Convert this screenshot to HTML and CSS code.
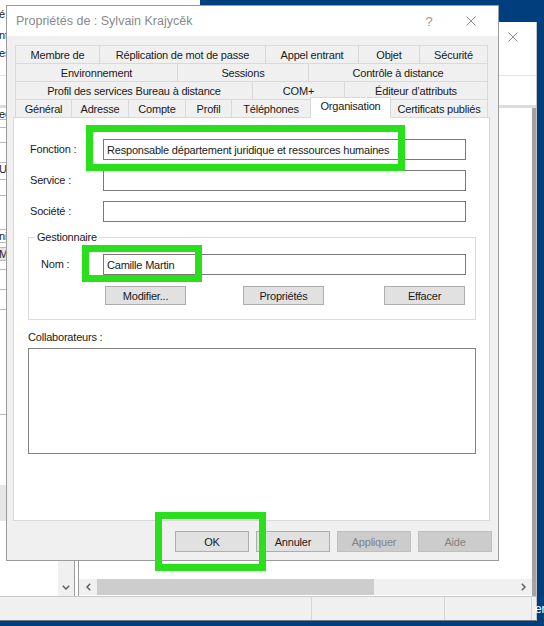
FILE: index.html
```html
<!DOCTYPE html>
<html lang="fr">
<head>
<meta charset="utf-8">
<title>Propriétés de : Sylvain Krajycěk</title>
<link rel="stylesheet" href="styles.css">
</head>
<body>
<div class="desktop">
  <div class="win-a"><span class="frag">é</span></div>

  <div class="win-b">
    <div class="wb-title">
      <div class="wb-frags"><span class="frag">nt</span><span class="frag">es</span></div>
      <svg class="x-icon" width="10" height="10" viewBox="0 0 10 10"><path d="M0.5 0.5 L9.5 9.5 M9.5 0.5 L0.5 9.5" stroke="#8d8d8d" stroke-width="1" fill="none"/></svg>
    </div>
    <div class="wb-menu"></div>
    <div class="wb-tool"></div>
    <div class="wb-panes">
      <div class="lpane">
        <div class="llist">
          <div class="lrow h12"><span class="frag">ec</span></div>
          <div class="lrow h8"></div>
          <div class="lrow h15"></div>
          <div class="lrow h20"></div>
          <div class="lrow h17"><span class="frag">U</span></div>
          <div class="lrow h16"></div>
          <div class="lrow h34"></div>
          <div class="lrow h13"><span class="frag">ni</span></div>
          <div class="lrow h5"></div>
          <div class="lrow h13 grey"><span class="frag">M</span></div>
          <div class="lrow h9"></div>
          <div class="lrow h20"></div>
          <div class="lrow h20"></div>
          <div class="lrow h105"></div>
          <div class="lrow h70 plain"></div>
          <div class="lrow h36 grey plain"></div>
        </div>
        <div class="lscroll">
          <div class="arr-down"><svg width="8" height="5" viewBox="0 0 8 5"><polyline points="0.8,0.8 4,4 7.2,0.8" fill="none" stroke="#606060" stroke-width="1.5"/></svg></div>
        </div>
      </div>
      <div class="splitter"></div>
      <div class="rpane">
        <div class="rlist"></div>
        <div class="hscroll">
          <div class="arr"><svg width="5" height="8" viewBox="0 0 5 8"><polyline points="4.2,0.8 1,4 4.2,7.2" fill="none" stroke="#606060" stroke-width="1.5"/></svg></div>
          <div class="thumb"></div>
          <div class="track"></div>
          <div class="arr"><svg width="5" height="8" viewBox="0 0 5 8"><polyline points="0.8,0.8 4,4 0.8,7.2" fill="none" stroke="#606060" stroke-width="1.5"/></svg></div>
        </div>
      </div>
    </div>
    <div class="wb-status">
      <div class="st st1"></div>
      <div class="st st2"></div>
      <div class="st st3"></div>
    </div>
  </div>

  <div class="desk-label">er</div>

  <div class="dialog">
    <div class="dlg-title">
      <span class="dlg-title-text">Propriétés de : Sylvain Krajycěk</span>
      <span class="cap cap-help">?</span>
      <span class="cap"><svg width="10" height="10" viewBox="0 0 10 10"><path d="M0.5 0.5 L9.5 9.5 M9.5 0.5 L0.5 9.5" stroke="#8d8d8d" stroke-width="1" fill="none"/></svg></span>
    </div>
    <div class="dlg-body">
      <div class="tabs">
        <div class="row">
          <div class="tab w85">Membre de</div>
          <div class="tab w166">Réplication de mot de passe</div>
          <div class="tab w93">Appel entrant</div>
          <div class="tab w61">Objet</div>
          <div class="tab w68">Sécurité</div>
        </div>
        <div class="row">
          <div class="tab w163">Environnement</div>
          <div class="tab w131">Sessions</div>
          <div class="tab w179">Contrôle à distance</div>
        </div>
        <div class="row">
          <div class="tab w238">Profil des services Bureau à distance</div>
          <div class="tab w92">COM+</div>
          <div class="tab w143">Éditeur d’attributs</div>
        </div>
        <div class="row">
          <div class="tab w57">Général</div>
          <div class="tab w57">Adresse</div>
          <div class="tab w57">Compte</div>
          <div class="tab w46">Profil</div>
          <div class="tab w79">Téléphones</div>
          <div class="tab sel">Organisation</div>
          <div class="tab w97">Certificats publiés</div>
        </div>
      </div>

      <div class="panel">
        <div class="fields">
          <label class="lbl">Fonction :</label>
          <div class="inp">Responsable département juridique et ressources humaines</div>
          <label class="lbl">Service :</label>
          <div class="inp"></div>
          <label class="lbl">Société :</label>
          <div class="inp"></div>
        </div>

        <fieldset class="group">
          <legend>Gestionnaire</legend>
          <div class="nom-row">
            <label class="lbl">Nom :</label>
            <div class="inp">Camille Martin</div>
          </div>
          <div class="grp-btns">
            <button class="btn small">Modifier...</button>
            <button class="btn small b-mid">Propriétés</button>
            <button class="btn small b-right">Effacer</button>
          </div>
        </fieldset>

        <div class="collab-lbl">Collaborateurs :</div>
        <div class="listbox"></div>
      </div>

      <div class="dlg-buttons">
        <button class="btn big">OK</button>
        <button class="btn big">Annuler</button>
        <button class="btn big disabled">Appliquer</button>
        <button class="btn big disabled">Aide</button>
      </div>
    </div>
  </div>

  <div class="mark m1"></div>
  <div class="mark m2"></div>
  <div class="mark m3"></div>
</div>
</body>
</html>
```

FILE: styles.css
```css
* { box-sizing: border-box; }
html, body { margin: 0; padding: 0; }
body {
  width: 544px;
  height: 626px;
  overflow: hidden;
  background: #003e7e;
  font-family: "Liberation Sans", Arial, sans-serif;
  font-size: 11px;
  letter-spacing: -0.2px;
  color: #1a1a1a;
}
.desktop { position: relative; width: 544px; height: 626px; overflow: hidden; }

/* background window A (top-left sliver) */
.win-a {
  position: absolute;
  left: 0; top: 0;
  width: 200px; height: 22px;
  background: #fff;
  padding-top: 8px;
}
.frag { display: block; line-height: 13px; margin-left: -1px; white-space: nowrap; }

/* background window B */
.win-b {
  position: absolute;
  left: 0; top: 22px;
  width: 537px; height: 599px;
  background: #fff;
  border-right: 1px solid #c4c4c4;
  border-bottom: 1px solid #6f7a86;
  display: flex;
  flex-direction: column;
}
.wb-title {
  height: 30px;
  display: flex;
  align-items: center;
  justify-content: space-between;
  padding-right: 18px;
}
.wb-frags { display: flex; flex-direction: column; gap: 5px; margin-top: 14px; }
.wb-menu { height: 24px; border-bottom: 1px solid #e2e2e2; }
.wb-tool { height: 29px; }
.wb-panes {
  flex: 1;
  display: flex;
  border-top: 3px solid #d8dde5;
}
.lpane { width: 75px; display: flex; border-right: 1px solid #9d9d9d; }
.llist { flex: 1; display: flex; flex-direction: column; }
.lrow { border-bottom: 1px solid #b9b9b9; }
.lrow.plain { border-bottom: none; }
.lrow.grey { background: #e6e6e6; }
.h5 { height: 5px; } .h8 { height: 8px; } .h9 { height: 9px; } .h12 { height: 12px; }
.h13 { height: 13px; } .h15 { height: 15px; } .h16 { height: 16px; } .h17 { height: 17px; }
.h20 { height: 20px; } .h34 { height: 34px; } .h36 { height: 36px; } .h70 { height: 70px; } .h105 { height: 105px; }
.lscroll {
  width: 16px;
  background: #f0f0f0;
  display: flex;
  flex-direction: column;
  justify-content: flex-end;
  padding-bottom: 1px;
}
.arr-down { height: 16px; display: flex; align-items: center; justify-content: center; }
.splitter { width: 3px; }
.rpane {
  flex: 1;
  display: flex;
  flex-direction: column;
  border-left: 1px solid #9d9d9d;
  border-right: 4px solid #a3a3a3;
}
.rlist { flex: 1; }
.hscroll {
  height: 16px;
  margin-bottom: 1px;
  display: flex;
  background: #f0f0f0;
}
.hscroll .arr { width: 18px; display: flex; align-items: center; justify-content: center; }
.thumb { width: 277px; background: #cdcdcd; }
.track { flex: 1; }
.wb-status {
  height: 24px;
  background: #f0f0f0;
  border-top: 1px solid #c9c9c9;
  display: flex;
  padding-right: 4px;
}
.st { height: 100%; }
.st1 { width: 312px; border-right: 1px solid #d6d6d6; }
.st2 { width: 133px; border-right: 1px solid #d6d6d6; }
.st3 { flex: 1; border-right: 1px solid #d6d6d6; }

.desk-label {
  position: absolute;
  left: 535px; top: 602px;
  color: #fff;
  font-size: 12px;
}

/* dialog */
.dialog {
  position: absolute;
  left: 6px; top: 5px;
  width: 493px; height: 556px;
  border: 1px solid #9b9b9b;
  background: #f0f0f0;
  display: flex;
  flex-direction: column;
}
.dlg-title {
  height: 30px;
  background: #fff;
  display: flex;
  align-items: center;
  padding-left: 9px;
  padding-right: 6px;
  color: #8a8a8a;
}
.dlg-title-text { flex: 1; font-size: 12.5px; letter-spacing: 0; }
.cap { width: 42px; height: 30px; display: flex; align-items: center; justify-content: center; }
.cap-help { font-size: 13px; color: #9a9a9a; }

.dlg-body {
  flex: 1;
  padding: 9px 8px 0 6px;
  display: flex;
  flex-direction: column;
}
.tabs { margin: 0 2px; }
.row { display: flex; align-items: flex-end; height: 18px; }
.tab {
  height: 18px;
  border-top: 1px solid #d9d9d9;
  border-right: 1px solid #d9d9d9;
  background: #f0f0f0;
  display: flex;
  align-items: center;
  justify-content: center;
  white-space: nowrap;
  padding-top: 1px;
}
.tab:first-child { border-left: 1px solid #d9d9d9; }
.tab.sel {
  width: 81px;
  height: 21px;
  margin-left: -1px;
  margin-bottom: -1px;
  border-left: 1px solid #d9d9d9;
  background: #fff;
  position: relative;
  z-index: 1;
  align-items: flex-start;
  padding-top: 1px;
  line-height: 14px;
}
.w46 { width: 46px; } .w57 { width: 57px; } .w61 { width: 61px; } .w68 { width: 68px; }
.w79 { width: 79px; } .w85 { width: 85px; } .w92 { width: 92px; } .w93 { width: 93px; }
.w97 { width: 97px; } .w131 { width: 131px; } .w143 { width: 143px; } .w163 { width: 163px; }
.w166 { width: 166px; } .w179 { width: 179px; } .w238 { width: 238px; }

.panel {
  height: 404px;
  background: #fff;
  border: 1px solid #d9d9d9;
  padding-top: 21px;
}
.fields {
  margin-left: 16px;
  display: grid;
  grid-template-columns: 73px 363px;
  row-gap: 10px;
  align-items: center;
}
.lbl { line-height: 13px; }
.inp {
  height: 21px;
  border: 1px solid #7a7a7a;
  background: #fff;
  padding-left: 3px;
  display: flex;
  align-items: center;
  white-space: nowrap;
}
.group {
  margin: 9px 13px 0 14px;
  padding: 10px 8px 14px 12px;
  border: 1px solid #dcdcdc;
  min-width: 0;
}
.group legend {
  padding: 0 2px;
  margin-left: -6px;
  line-height: 13px;
}
.nom-row {
  display: grid;
  grid-template-columns: 62px 363px;
  align-items: center;
}
.grp-btns { display: flex; margin-top: 11px; margin-left: 64px; }
.btn {
  font: inherit;
  letter-spacing: inherit;
  color: #1a1a1a;
  background: #e1e1e1;
  border: 1px solid #adadad;
  padding: 0;
  margin: 0;
}
.btn.small { width: 81px; height: 19px; }
.b-mid { margin-left: 57px; }
.b-right { margin-left: 60px; }
.collab-lbl { margin: 11px 0 0 14px; line-height: 13px; }
.listbox {
  margin: 4px 13px 0 14px;
  height: 106px;
  border: 1px solid #828282;
  background: #fff;
}
.dlg-buttons {
  display: flex;
  justify-content: flex-end;
  gap: 7px;
  padding-top: 10px;
  margin-right: -2px;
}
.btn.big { width: 74px; height: 21px; }
.btn.disabled { background: #cccccc; border-color: #bfbfbf; color: #838383; }

/* annotation highlights */
.mark { position: absolute; border: 7px solid #2ae01c; }
.m1 { left: 86px; top: 125px; width: 319px; height: 46px; }
.m2 { left: 82px; top: 245px; width: 120px; height: 37px; }
.m3 { left: 155px; top: 512px; width: 111px; height: 59px; }
```
